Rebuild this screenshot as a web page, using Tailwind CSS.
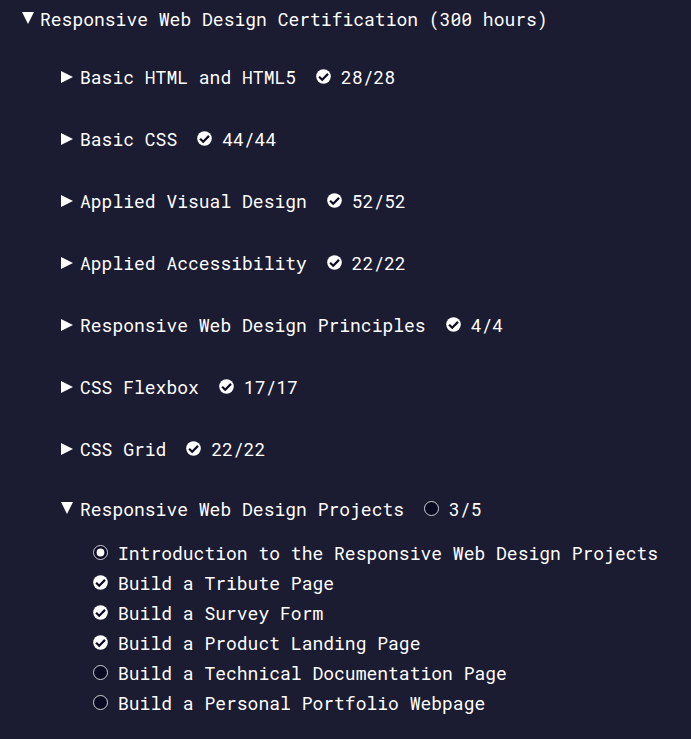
<!DOCTYPE html>
<html lang="en">
<head>
<meta charset="utf-8">
<meta name="viewport" content="width=device-width, initial-scale=1">
<title>Responsive Web Design Certification</title>
<script src="https://cdn.jsdelivr.net/npm/@tailwindcss/browser@4"></script>
</head>
<body class="min-h-screen bg-[#1b1b32] font-['Roboto_Mono','Liberation_Mono',monospace] text-[18px] leading-[30px] text-white">
<svg class="hidden" aria-hidden="true">
  <symbol id="closed" viewBox="0 0 12 12"><path d="M0 0L12 6L0 12Z" fill="#fff"/></symbol>
  <symbol id="open" viewBox="0 0 12 12"><path d="M0 0H12L6 12Z" fill="#fff"/></symbol>
  <symbol id="done" viewBox="0 0 15 15"><circle cx="7.5" cy="7.5" r="7.3" fill="#fff"/><path d="M3.1 7.8L6.2 10.7L12 4.9" fill="none" stroke="#0a0a23" stroke-width="2.2"/></symbol>
  <symbol id="todo" viewBox="0 0 15 15"><circle cx="7.5" cy="7.5" r="7" fill="#0a0a23" stroke="#fff" stroke-width=".8"/></symbol>
  <symbol id="intro" viewBox="0 0 15 15"><circle cx="7.5" cy="7.5" r="7" fill="#0a0a23" stroke="#fff" stroke-width=".8"/><circle cx="7.5" cy="7.5" r="3.9" fill="#fff"/></symbol>
</svg>
<main class="pt-1 pl-[22px]">
  <button type="button" aria-expanded="true" class="flex items-center gap-[6px] whitespace-nowrap"><svg class="mb-[2px] size-3"><use href="#open"/></svg>Responsive Web Design Certification (300 hours)</button>
  <ul class="mt-7 pl-[39px] whitespace-nowrap">
    <li class="pb-8"><button type="button" aria-expanded="false" class="flex items-center"><svg class="mr-[7px] size-3"><use href="#closed"/></svg>Basic HTML and HTML5<svg class="mr-[10px] mb-[2px] ml-5 size-[15px]"><use href="#done"/></svg><span>28/28</span></button></li>
    <li class="pb-8"><button type="button" aria-expanded="false" class="flex items-center"><svg class="mr-[7px] size-3"><use href="#closed"/></svg>Basic CSS<svg class="mr-[10px] mb-[2px] ml-5 size-[15px]"><use href="#done"/></svg><span>44/44</span></button></li>
    <li class="pb-8"><button type="button" aria-expanded="false" class="flex items-center"><svg class="mr-[7px] size-3"><use href="#closed"/></svg>Applied Visual Design<svg class="mr-[10px] mb-[2px] ml-5 size-[15px]"><use href="#done"/></svg><span>52/52</span></button></li>
    <li class="pb-8"><button type="button" aria-expanded="false" class="flex items-center"><svg class="mr-[7px] size-3"><use href="#closed"/></svg>Applied Accessibility<svg class="mr-[10px] mb-[2px] ml-5 size-[15px]"><use href="#done"/></svg><span>22/22</span></button></li>
    <li class="pb-8"><button type="button" aria-expanded="false" class="flex items-center"><svg class="mr-[7px] size-3"><use href="#closed"/></svg>Responsive Web Design Principles<svg class="mr-[10px] mb-[2px] ml-5 size-[15px]"><use href="#done"/></svg><span>4/4</span></button></li>
    <li class="pb-8"><button type="button" aria-expanded="false" class="flex items-center"><svg class="mr-[7px] size-3"><use href="#closed"/></svg>CSS Flexbox<svg class="mr-[10px] mb-[2px] ml-5 size-[15px]"><use href="#done"/></svg><span>17/17</span></button></li>
    <li class="pb-[30px]"><button type="button" aria-expanded="false" class="flex items-center"><svg class="mr-[7px] size-3"><use href="#closed"/></svg>CSS Grid<svg class="mr-[10px] mb-[2px] ml-5 size-[15px]"><use href="#done"/></svg><span>22/22</span></button></li>
    <li>
      <button type="button" aria-expanded="true" class="flex items-center"><svg class="mr-[7px] mb-[2px] size-3"><use href="#open"/></svg>Responsive Web Design Projects<svg class="mr-[10px] mb-[2px] ml-5 size-[15px]"><use href="#todo"/></svg><span>3/5</span></button>
      <ul class="mt-[14px] pl-8">
        <li><a href="#introduction" class="flex items-center gap-[10px]"><svg class="mb-[2px] size-[15px]"><use href="#intro"/></svg>Introduction to the Responsive Web Design Projects</a></li>
        <li><a href="#tribute" class="flex items-center gap-[10px]"><svg class="mb-[2px] size-[15px]"><use href="#done"/></svg>Build a Tribute Page</a></li>
        <li><a href="#survey" class="flex items-center gap-[10px]"><svg class="mb-[2px] size-[15px]"><use href="#done"/></svg>Build a Survey Form</a></li>
        <li><a href="#product" class="flex items-center gap-[10px]"><svg class="mb-[2px] size-[15px]"><use href="#done"/></svg>Build a Product Landing Page</a></li>
        <li><a href="#technical" class="flex items-center gap-[10px]"><svg class="mb-[2px] size-[15px]"><use href="#todo"/></svg>Build a Technical Documentation Page</a></li>
        <li><a href="#portfolio" class="flex items-center gap-[10px]"><svg class="mb-[2px] size-[15px]"><use href="#todo"/></svg>Build a Personal Portfolio Webpage</a></li>
      </ul>
    </li>
  </ul>
</main>
</body>
</html>
